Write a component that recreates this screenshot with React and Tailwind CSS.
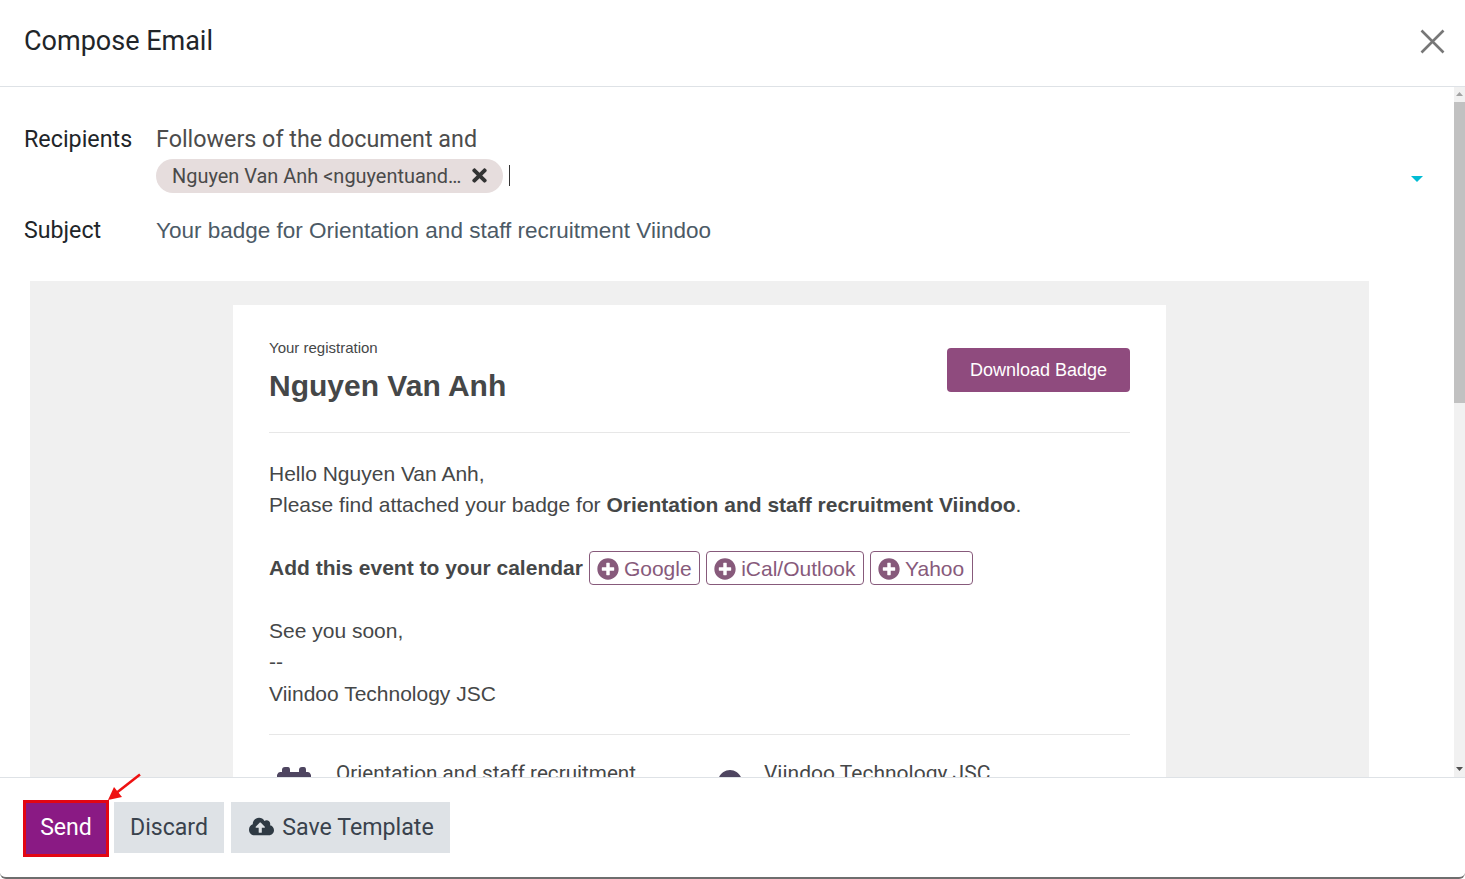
import React from "react";
import { FaCloudUploadAlt, FaPlusCircle, FaTimes, FaMapMarkerAlt } from "react-icons/fa";

function CalButton({ label }) {
  return (
    <span className="inline-flex items-center h-[34px] mb-[1px] pl-[7px] pr-[7.5px] gap-[5px] border border-[#875a7b] rounded-[4px] text-[#875a7b] text-[21px]">
      <FaPlusCircle className="w-[22px] h-[22px] mt-[1px]" />
      <span className="pt-[1px]">{label}</span>
    </span>
  );
}

function Scrollbar() {
  return (
    <div className="w-[11px] shrink-0 bg-[#f1f1f1] flex flex-col items-center">
      <svg width="9" height="15" viewBox="0 0 9 15" className="shrink-0"><path d="M1 9 L4.5 5 L8 9 Z" fill="#a3a3a3" /></svg>
      <div className="w-full h-[301px] bg-[#c1c1c1] shrink-0" />
      <div className="flex-1" />
      <svg width="9" height="15" viewBox="0 0 9 15" className="shrink-0"><path d="M1 5 L8 5 L4.5 9 Z" fill="#505050" /></svg>
    </div>
  );
}

export default function App() {
  return (
    <div className="relative h-[879px] w-full overflow-hidden bg-white flex flex-col font-['Roboto',sans-serif] text-[#212529]">
      <header className="h-[87px] shrink-0 border-b border-[#dee2e6] flex items-center justify-between pl-[24px] pr-[20px] pb-[3px]">
        <h1 className="text-[27px] leading-none font-normal">Compose Email</h1>
        <svg width="25" height="25" viewBox="0 0 25 25" className="-mt-[1px]"><path d="M1.5 1.5 L23.5 23.5 M23.5 1.5 L1.5 23.5" stroke="#777" strokeWidth="2.6" /></svg>
      </header>

      <div className="flex-1 min-h-0 flex">
        <main className="flex-1 min-w-0 overflow-hidden pt-[36px] pl-[24px]">
          <div className="flex text-[23.3px] leading-[33px]">
            <div className="w-[132px] shrink-0">Recipients</div>
            <div className="flex-1 min-w-0 text-[#4c4c4c]">
              <div>Followers of the document and</div>
              <div className="flex items-center h-[37px] pr-[31px] pt-[2px]">
                <span className="flex items-center h-[34px] rounded-full bg-[#e6dddd] pl-[16px] pr-[16px] text-[19.95px] text-[#4a4a4a]">
                  <span className="pt-[1px]">Nguyen Van Anh &lt;nguyentuand…</span>
                  <FaTimes className="ml-[11px] w-[15px] h-[21px] text-[#333]" />
                </span>
                <span className="ml-[6px] w-px h-[21px] bg-[#333]" />
                <span className="ml-auto w-0 h-0 border-x-[6px] border-x-transparent border-t-[6px] border-t-[#00bcd4] mt-[6px]" />
              </div>
            </div>
          </div>
          <div className="flex leading-[33px] mt-[21px]">
            <div className="w-[132px] shrink-0 text-[23.2px]">Subject</div>
            <div className="text-[#4c5a66] text-[22.5px] font-['Liberation_Sans',Arial,sans-serif]">Your badge for Orientation and staff recruitment Viindoo</div>
          </div>

          <div className="ml-[6px] mt-[34px] w-[1339px] h-[600px] bg-[#f0f0f0] pt-[24px] flex justify-center font-['Liberation_Sans',Arial,sans-serif] text-[#454748]">
            <div className="w-[933px] h-[576px] bg-white px-[36px] pt-[32px]">
              <div className="flex justify-between items-start h-[96px] border-b border-[#e7e7e7]">
                <div>
                  <div className="text-[15px] leading-[20px] mt-[1px]">Your registration</div>
                  <div className="text-[30px] leading-[38px] font-bold mt-[9px]">Nguyen Van Anh</div>
                </div>
                <span className="mt-[11px] h-[44px] w-[183px] flex items-center justify-center rounded-[4px] bg-[#8f4b7e] text-white text-[18px]">Download Badge</span>
              </div>
              <div className="pt-[25px] text-[21px] leading-[31.4px]">
                <div>Hello Nguyen Van Anh,</div>
                <div>Please find attached your badge for <b>Orientation and staff recruitment Viindoo</b>.</div>
                <div className="h-[31px]" />
                <div className="flex items-center gap-[6px] h-[34px]">
                  <b className="mb-[3px]">Add this event to your calendar</b>
                  <CalButton label="Google" />
                  <CalButton label="iCal/Outlook" />
                  <CalButton label="Yahoo" />
                </div>
                <div className="h-[29px]" />
                <div>See you soon,</div>
                <div>--</div>
                <div>Viindoo Technology JSC</div>
              </div>
              <div className="mt-[25px] border-t border-[#e7e7e7] pt-[26px] flex font-['Roboto',sans-serif] text-[21px] leading-[24px]">
                <svg width="36" height="36" viewBox="0 0 36 36" className="ml-[7px] mt-[6px] shrink-0">
                  <path d="M1 36 V8 Q2 5 4 5 H6 V3 Q6 0 9 0 H12 Q14 0 14 3 V5 H23 V3 Q23 0 26 0 H28 Q30 0 30 3 V5 H32 Q34 5 35 8 V36 Z" fill="#4e4560" />
                </svg>
                <div className="ml-[24px] w-[382px] text-[20.65px]">Orientation and staff recruitment</div>
                <FaMapMarkerAlt className="w-[24px] h-[32px] text-[#4e4560] mt-[9px]" />
                <div className="ml-[22px]">Viindoo Technology JSC</div>
              </div>
            </div>
          </div>
        </main>
        <Scrollbar />
      </div>

      <footer className="h-[102px] shrink-0 border-t border-[#dee2e6] bg-white rounded-b-[6px] border-b-2 border-b-[#6e6e6e] flex items-start pl-[23px] pt-[22px] text-[23.1px]">
        <button className="w-[86px] h-[57px] border-[3px] border-[#e30613] bg-[#8a1a84] text-white">Send</button>
        <button className="ml-[5px] mt-[2px] w-[110px] h-[51px] pt-[2px] bg-[#dee2e6] text-[#39424d]">Discard</button>
        <button className="ml-[7px] mt-[2px] w-[219px] h-[51px] bg-[#dee2e6] text-[#39424d] text-[23.2px] flex items-center justify-center gap-[8px] pl-[2px]">
          <FaCloudUploadAlt className="w-[25px] h-[25px] text-[#2f3a44] -mt-[3px]" />
          Save Template
        </button>
      </footer>

      <svg className="absolute left-[105px] top-[772px] pointer-events-none" width="38" height="30" viewBox="0 0 38 30">
        <path d="M35 2.5 L10 22" stroke="#ee1111" strokeWidth="2.6" />
        <path d="M3 28 L9 15 L17 25 Z" fill="#ee1111" />
      </svg>
    </div>
  );
}
